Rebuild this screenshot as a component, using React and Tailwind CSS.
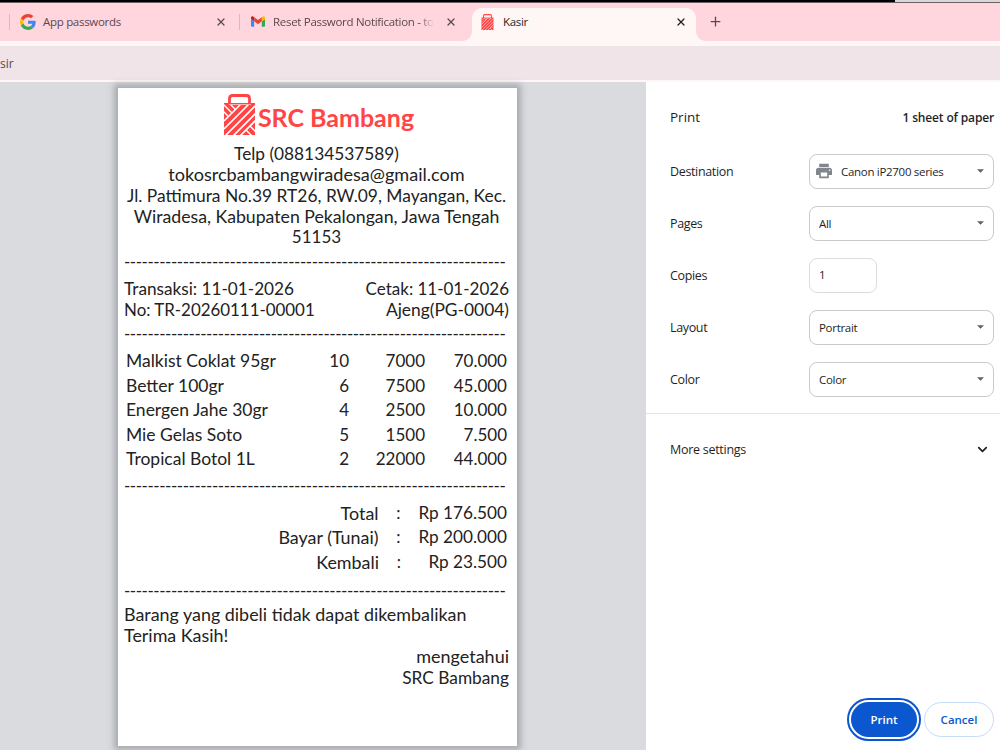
import { X, Plus, ChevronDown } from "lucide-react";

const items = [
  { name: "Malkist Coklat 95gr", qty: 10, price: "7000", total: "70.000" },
  { name: "Better 100gr", qty: 6, price: "7500", total: "45.000" },
  { name: "Energen Jahe 30gr", qty: 4, price: "2500", total: "10.000" },
  { name: "Mie Gelas Soto", qty: 5, price: "1500", total: "7.500" },
  { name: "Tropical Botol 1L", qty: 2, price: "22000", total: "44.000" },
];

const summary = [
  { label: "Total", value: "Rp 176.500" },
  { label: "Bayar (Tunai)", value: "Rp 200.000" },
  { label: "Kembali", value: "Rp 23.500" },
];

function BagLogo({ className, gap = "#fff" }) {
  return (
    <svg viewBox="0 0 31 41" className={className} fill="none">
      <path d="M0 9H5V11H26.5V9H31V41H0Z" fill="#ff4545" />
      <g stroke={gap} strokeWidth="1.6">
        <path d="M20 7L0 27M28 7L0 35M34 9L0 43M34 17L8 43M34 24L15 43" />
        <path d="M-1 10L8 19M4 8L11.5 15.5M-1 17L4 22M22 36L29 43M26 32L33 39" strokeWidth="1.4" />
      </g>
      <path d="M5.5 10V4.5Q5.5 1.5 8.5 1.5H22.5Q25.5 1.5 25.5 4.5V10" stroke="#ff4545" strokeWidth="2.8" />
      <path d="M8 8H24" stroke={gap} strokeWidth="1.4" />
      <path d="M5 9.7H26" stroke="#ff4545" strokeWidth="1.4" />
    </svg>
  );
}

function GoogleIcon() {
  return (
    <svg viewBox="0 0 48 48" className="size-4">
      <path fill="#ea4335" d="M24 9.5c3.5 0 6.7 1.2 9.2 3.6l6.9-6.9C35.9 2.4 30.5 0 24 0 14.6 0 6.5 5.4 2.6 13.2l8 6.2C12.4 13.7 17.7 9.5 24 9.5z" />
      <path fill="#4285f4" d="M47 24.6c0-1.6-.2-3.1-.4-4.6H24v9h12.9c-.6 3-2.3 5.5-4.8 7.2l7.7 6C44.4 38 47 32 47 24.6z" />
      <path fill="#fbbc05" d="M10.5 28.6c-.5-1.5-.8-3-.8-4.6s.3-3.1.8-4.6l-8-6.2C1 16.5 0 20.1 0 24s.9 7.5 2.6 10.8l7.9-6.2z" />
      <path fill="#34a853" d="M24 48c6.5 0 11.9-2.1 15.9-5.8l-7.7-6c-2.2 1.5-4.9 2.3-8.2 2.3-6.3 0-11.6-4.2-13.5-9.9l-8 6.2C6.5 42.6 14.6 48 24 48z" />
    </svg>
  );
}

function GmailIcon() {
  return (
    <svg viewBox="0 0 24 18" className="w-[14px] h-[11px]">
      <path fill="#4285f4" d="M1.6 18H5.5V8.7L0 4.6V16.4C0 17.3.7 18 1.6 18z" />
      <path fill="#34a853" d="M18.5 18h3.900c.9 0 1.600-.7 1.600-1.600V4.600l-5.500 4.100z" />
      <path fill="#fbbc04" d="M18.5 1.6v7.1L24 4.6V2.5c0-2-2.3-3.2-3.9-2z" />
      <path fill="#ea4335" d="M5.5 8.7V1.6L12 6.5l6.5-4.9v7.1L12 13.6z" />
      <path fill="#c5221f" d="M0 2.5v2.1l5.5 4.1V1.6L3.9.5C2.3-.7 0 .5 0 2.5z" />
    </svg>
  );
}

function PrinterIcon() {
  return (
    <svg viewBox="2 2 20 20" className="size-4 mr-[9px] -ml-[3px]" fill="#80868b">
      <path d="M19 8H5c-1.66 0-3 1.34-3 3v6h4v4h12v-4h4v-6c0-1.66-1.34-3-3-3zm-3 11H8v-5h8v5zm3-7c-.55 0-1-.45-1-1s.45-1 1-1 1 .45 1 1-.45 1-1 1zM18 3H6v4h12V3z" />
    </svg>
  );
}

function Divider({ className }) {
  return (
    <div className={`h-[21px] leading-[21px] whitespace-nowrap tracking-[-0.45px] ${className}`}>
      {"-".repeat(65)}
    </div>
  );
}

function Select({ children, icon }) {
  return (
    <div className="flex items-center w-[185px] h-[35px] border border-[#c9cacc] rounded-lg px-[9px]">
      {icon}
      <span className="flex-1 whitespace-nowrap tracking-[-0.3px] pt-px">{children}</span>
      <svg viewBox="0 0 8 4" className="w-[7px] h-1">
        <path d="M0 0H8L4 4Z" fill="#5f6368" />
      </svg>
    </div>
  );
}

function Row({ label, children }) {
  return (
    <div className="flex items-center h-[52px] pr-[6px]">
      <span className="w-[139px] text-[12.5px] tracking-[-0.35px] pt-[2px]">{label}</span>
      {children}
    </div>
  );
}

function Receipt() {
  return (
    <div className="w-[399px] h-[658px] bg-white shadow-[0_0_6px_4px_rgba(110,112,118,0.45)] text-[#222] text-[17px] leading-[21px] font-['Lato',sans-serif] pl-[6px] pr-[8px] pt-[6px]">
      <div className="flex items-start justify-center h-[42px] pl-[5px]">
        <BagLogo className="w-[31px] h-[41px]" />
        <span className="text-[#ff4545] text-[25px] font-bold ml-[3px] mt-[13px]">SRC Bambang</span>
      </div>
      <div className="text-center mt-[7px] whitespace-nowrap">
        <p className="text-[17.3px]">Telp (088134537589)</p>
        <p className="text-[18.1px]">tokosrcbambangwiradesa@gmail.com</p>
        <p className="text-[17.4px]">Jl. Pattimura No.39 RT26, RW.09, Mayangan, Kec.</p>
        <p className="text-[17.7px]">Wiradesa, Kabupaten Pekalongan, Jawa Tengah</p>
        <p className="-mt-px">51153</p>
      </div>
      <Divider className="mt-[4px]" />
      <div className="flex justify-between mt-[6px]">
        <div>
          <p className="text-[17.2px]">Transaksi: 11-01-2026</p>
          <p className="text-[16.9px]">No: TR-20260111-00001</p>
        </div>
        <div className="text-right">
          <p>Cetak: 11-01-2026</p>
          <p className="text-[17.4px]">Ajeng(PG-0004)</p>
        </div>
      </div>
      <Divider className="mt-[3px]" />
      <div className="mt-[5px] px-[2px] leading-[24.5px]">
        {items.map((item) => (
          <div key={item.name} className="flex text-right">
            <span className="w-[180px] text-left text-[17.5px]">{item.name}</span>
            <span className="w-[43px]">{item.qty}</span>
            <span className="w-[76px]">{item.price}</span>
            <span className="flex-1">{item.total}</span>
          </div>
        ))}
      </div>
      <Divider className="mt-[3px]" />
      <div className="mt-[5px] px-[2px] leading-[24.5px] whitespace-nowrap">
        {summary.map((row) => (
          <div key={row.label} className="flex text-right">
            <span className="w-[253px] text-[17.9px]">{row.label}</span>
            <span className="w-[40px] text-center">:</span>
            <span className="flex-1 text-[17.2px]">{row.value}</span>
          </div>
        ))}
      </div>
      <Divider className="mt-[6px]" />
      <div className="mt-[3px] text-[17.9px]">
        <p>Barang yang dibeli tidak dapat dikembalikan</p>
        <p>Terima Kasih!</p>
      </div>
      <div className="text-right">
        <p className="text-[18px]">mengetahui</p>
        <p className="text-[17.3px]">SRC Bambang</p>
      </div>
    </div>
  );
}

export default function App() {
  return (
    <div className="w-[1000px] h-[750px] overflow-hidden flex flex-col bg-white text-[#1f1f1f] font-['Open_Sans',sans-serif] text-[11.5px]">
      <div className="flex h-[3px] border-b border-[#6d6165]">
        <div className="w-[895px] bg-black" />
        <div className="flex-1 bg-[#d8d6d7]" />
      </div>

      {/* Tab strip */}
      <div className="flex h-[38px] bg-[#ffd6de] text-[#5c474c] tracking-[-0.3px]">
        <div className="flex items-center w-[239px] pl-[9px] pr-[12px] pb-[1px]">
          <div className="w-px h-4 bg-[#fba9b8] mr-[10px]" />
          <GoogleIcon />
          <span className="ml-[7px] flex-1">App passwords</span>
          <X size={12} strokeWidth={2.5} />
        </div>
        <div className="flex items-center w-[233px] pr-[15px] pb-[1px]">
          <div className="w-px h-4 bg-[#fba9b8] mr-[11px]" />
          <GmailIcon />
          <span className="ml-2 mr-auto whitespace-nowrap [mask-image:linear-gradient(to_right,black_91%,transparent)]">
            Reset Password Notification - to
          </span>
          <X size={12} strokeWidth={2.5} />
        </div>
        <div className="relative flex items-center w-[224px] h-[33px] mt-[5px] pb-[6px] pl-[9px] pr-[9px] rounded-t-[10px] bg-[#fff7f5] text-[#1f1f1f]">
          {/* Flared feet of the active tab */}
          <div className="absolute -left-[9px] bottom-0 size-[9px] bg-[radial-gradient(circle_at_top_left,transparent_8.5px,#fff7f5_9px)]" />
          <div className="absolute -right-[9px] bottom-0 size-[9px] bg-[radial-gradient(circle_at_top_right,transparent_8.5px,#fff7f5_9px)]" />
          <BagLogo className="w-[13px] h-4" gap="#ffe3e0" />
          <span className="ml-[9px] flex-1">Kasir</span>
          <X size={12} strokeWidth={2.5} />
        </div>
        <Plus size={15} className="ml-3 mt-[11px]" />
      </div>

      {/* Address bar */}
      <div className="h-[41px] bg-[#f0e4e9] border-t-[5px] border-b-[2px] border-[#fff7f5] flex items-center text-[#5c474c] text-[12px] pt-px">
        sir
      </div>

      <div className="flex flex-1 min-h-0">
        <div className="w-[646px] bg-[#d9dbdf] pl-[118px] pt-[6px]">
          <Receipt />
        </div>
        <div className="w-[354px] flex flex-col">
          <div className="flex justify-between items-center pl-6 pr-[6px] h-[71px]">
            <span className="text-[13.5px]">Print</span>
            <span className="font-semibold text-[12px] tracking-[-0.15px]">1 sheet of paper</span>
          </div>
          <div className="pl-6 -mt-[8px]">
            <Row label="Destination">
              <Select icon={<PrinterIcon />}>Canon iP2700 series</Select>
            </Row>
            <Row label="Pages">
              <Select>All</Select>
            </Row>
            <Row label="Copies">
              <div className="flex items-center w-[68px] h-[35px] border border-[#dcdcdd] rounded-lg pl-[9px]">1</div>
            </Row>
            <Row label="Layout">
              <Select>Portrait</Select>
            </Row>
            <Row label="Color">
              <Select>Color</Select>
            </Row>
          </div>
          <div className="flex items-center justify-between h-[72px] mt-[8px] pl-6 pr-[10px] border-t border-[#e5e5e6] text-[12.5px] tracking-[-0.28px]">
            <span className="pt-px">More settings</span>
            <ChevronDown size={15} strokeWidth={2.7} />
          </div>
          <div className="mt-auto flex justify-end gap-[7px] pr-[6px] pb-[13px] font-semibold">
            <button className="w-[66px] h-[35px] rounded-full bg-[#0b57d0] text-white outline-2 outline-offset-2 outline-[#0b57d0]">Print</button>
            <button className="w-[70px] h-[35px] rounded-full border border-[#c7dbfb] text-[#0b57d0]">Cancel</button>
          </div>
        </div>
      </div>
    </div>
  );
}
